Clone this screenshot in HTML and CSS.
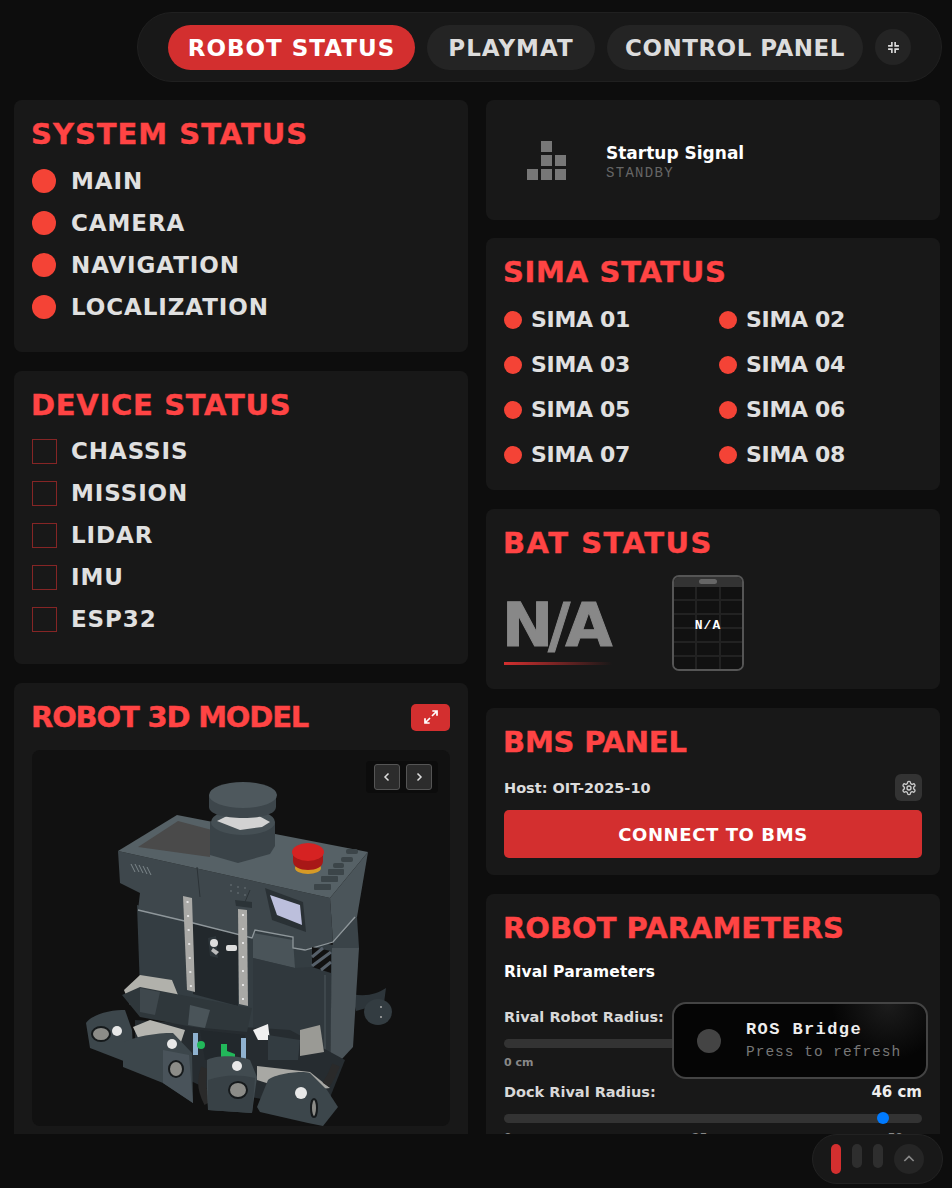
FILE: index.html
```html
<!DOCTYPE html>
<html lang="en">
<head>
    <meta charset="UTF-8">
    <meta name="viewport" content="width=device-width, initial-scale=1.0">
    <title>Robot Status</title>
    <link rel="stylesheet" href="styles.css">
</head>
<body>

<div class="page">
    <header class="topbar">
        <nav class="nav-pill">
            <button class="nav-btn status active">ROBOT STATUS</button>
            <button class="nav-btn playmat">PLAYMAT</button>
            <button class="nav-btn control">CONTROL PANEL</button>
            <button class="nav-round">
                <svg width="13" height="13" viewBox="0 0 24 24" fill="none" stroke="#ddd" stroke-width="3">
                    <path d="M9 2v7H2M15 2v7h7M9 22v-7H2M15 22v-7h7"/>
                </svg>
            </button>
        </nav>
    </header>

    <main class="columns">
        <div class="column">
            <section class="card system-card">
                <h2 class="card-title">SYSTEM STATUS</h2>
                <ul class="status-list">
                    <li><span class="dot"></span>MAIN</li>
                    <li><span class="dot"></span>CAMERA</li>
                    <li><span class="dot"></span>NAVIGATION</li>
                    <li><span class="dot"></span>LOCALIZATION</li>
                </ul>
            </section>

            <section class="card device-card">
                <h2 class="card-title">DEVICE STATUS</h2>
                <ul class="status-list">
                    <li><span class="box"></span>CHASSIS</li>
                    <li><span class="box"></span>MISSION</li>
                    <li><span class="box"></span>LIDAR</li>
                    <li><span class="box"></span>IMU</li>
                    <li><span class="box"></span>ESP32</li>
                </ul>
            </section>

            <section class="card model-card">
                <div class="model-head">
                    <h2 class="card-title">ROBOT 3D MODEL</h2>
                    <button class="expand-btn">
                        <svg width="16" height="16" viewBox="0 0 24 24" fill="none" stroke="#fff" stroke-width="2.6">
                            <path d="M14 3h7v7M21 3l-7.5 7.5M10 21H3v-7M3 21l7.5-7.5"/>
                        </svg>
                    </button>
                </div>
                <div class="viewer">
                    <div class="viewer-arrows">
                        <button class="arrow-btn">
                            <svg width="12" height="12" viewBox="0 0 24 24" fill="none" stroke="#ddd" stroke-width="3"><path d="M15 5l-7 7 7 7"/></svg>
                        </button>
                        <button class="arrow-btn">
                            <svg width="12" height="12" viewBox="0 0 24 24" fill="none" stroke="#ddd" stroke-width="3"><path d="M9 5l7 7-7 7"/></svg>
                        </button>
                    </div>
                    <svg class="robot" viewBox="32 750 418 376" width="418" height="376">
                        <!-- rear wheel -->
                        <path d="M352 994c14 3 25 0 34-6l-2 15-28 8z" fill="#2d353a"/>
                        <ellipse cx="378" cy="1012" rx="14" ry="13" fill="#333c41"/>
                        <circle cx="381" cy="1007" r="1" fill="#aaa"/>
                        <circle cx="381" cy="1017" r="1" fill="#aaa"/>

                        <!-- lower body -->
                        <polygon points="137,905 333,945 330,1072 200,1040 140,990" fill="#343d42"/>
                        <polygon points="333,942 357,917 359,948 332,950" fill="#3a4348"/>
                        <polygon points="332,948 359,948 353,1047 330,1072" fill="#4a5358"/>
                        <polygon points="193,923 238,933 238,1006 193,994" fill="#22282c"/>
                        <polygon points="253,933 293,940 295,968 253,958" fill="#4a5459"/>
                        <polygon points="295,968 312,967 331,973 330,1072 253,1050 253,958" fill="#30383d"/>
                        <path d="M325 975v95" stroke="#3e474c" stroke-width="2" fill="none"/>

                        <!-- upper block -->
                        <polygon points="118,851 330,898 333,942 305,950 293,948 293,937 255,930 252,938 193,923 138,910 140,893 120,883" fill="#3e474c"/>
                        <polygon points="118,851 177,815 368,852 330,898" fill="#566166"/>
                        <polygon points="368,852 357,917 333,942 330,898" fill="#4b555a"/>
                        <polygon points="138,847 178,821 212,830 210,857" fill="#4a4a4a"/>
                        <path d="M138 910l55 13 59 15 3-8 38 7v11l12 2 28-8 22-25" stroke="#8f979b" stroke-width="1.3" fill="none"/>
                        <path d="M197 867l3 30M250 890l-5 12" stroke="#2c3337" fill="none"/>

                        <!-- vents and pins -->
                        <path d="M131 864l4 8M135 864l4 8M139 865l4 8M143 866l4 8M147 867l4 8" stroke="#7c868a" fill="none"/>
                        <path d="M230 885h2M237 887h2M244 888h2M230 891h2M237 893h2M244 895h2" stroke="#6b7478" fill="none"/>

                        <!-- strips -->
                        <polygon points="235,900 252,902 252,908 236,906" fill="#2b3337"/>
                        <polygon points="183,896 192,898 195,992 187,990" fill="#a9a9a6"/>
                        <polygon points="238,909 247,910 248,1006 239,1004" fill="#a9a9a6"/>
                        <path d="M187.500 901l3.500 88M243 914v90" stroke="#e4e4e4" stroke-width="2" stroke-dasharray="2 12" fill="none"/>

                        <!-- parts inside the channel -->
                        <path d="M208 938l8-2 2 22-8-2z" fill="#2d353a"/>
                        <circle cx="214" cy="943" r="4" fill="#ddd"/>
                        <rect x="226" y="945" width="11" height="6" rx="2" fill="#ddd"/>
                        <polygon points="213,948 219,952 216,955 211,951" fill="#bbb"/>

                        <!-- display -->
                        <polygon points="265,888 303,902 306,932 272,920" fill="#2a3135"/>
                        <polygon points="270,895 300,905 302,925 277,915" fill="#bcbfdc"/>

                        <!-- hatch -->
                        <polygon points="312,947 331,951 331,973 312,967" fill="#111"/>
                        <path d="M312 957l11-9M312 966l19-14M321 970l10-8" stroke="#56606a" stroke-width="3" fill="none"/>

                        <!-- top panel buttons -->
                        <g fill="#3c4549">
                            <rect x="346" y="849" width="12" height="5" rx="2"/>
                            <rect x="341" y="857" width="12" height="5" rx="2"/>
                            <rect x="333" y="863" width="11" height="5" rx="2"/>
                            <rect x="328" y="869" width="16" height="6" rx="1"/>
                            <rect x="321" y="876" width="17" height="6" rx="1"/>
                            <rect x="314" y="884" width="17" height="6" rx="1"/>
                        </g>

                        <!-- e-stop -->
                        <ellipse cx="308" cy="868" rx="13" ry="6" fill="#d69a26"/>
                        <path d="M293 853v8c0 6 7 9 15 9s15-3 15-9v-8z" fill="#a81717"/>
                        <ellipse cx="308" cy="852" rx="16" ry="9" fill="#d62222"/>

                        <!-- lidar -->
                        <path d="M210 822v33l28 8 32-9 5-8v-24z" fill="#3a4348"/>
                        <ellipse cx="243" cy="822" rx="32" ry="13" fill="#454f54"/>
                        <path d="M217 821l10-5h32l11 6-8 5-22 3z" fill="#d2d2d2"/>
                        <path d="M209 795v12c0 7 15 11 34 11s33-4 33-11v-12z" fill="#3d464b"/>
                        <ellipse cx="243" cy="795" rx="34" ry="13" fill="#4e585d"/>

                        <!-- base under the bumpers -->
                        <polygon points="135,1020 290,1030 345,1060 325,1110 210,1090 135,1055" fill="#262c30"/>
                        <polygon points="257,1066 310,1072 330,1088 295,1092 257,1080" fill="#a8a8a4"/>

                        <!-- gripper bar -->
                        <polygon points="124,990 140,975 172,980 178,995 130,1005" fill="#b1b1ab"/>
                        <polygon points="122,995 140,987 233,1005 252,1008 247,1032 193,1027 140,1017" fill="#2f373b"/>
                        <polygon points="140,988 160,992 155,1015 140,1012" fill="#3f484d"/>
                        <polygon points="190,1005 210,1010 205,1028 188,1025" fill="#4a5459"/>
                        <polygon points="133,1027 150,1020 185,1030 180,1045 140,1042" fill="#b5b5b0"/>

                        <!-- centre electronics -->
                        <polygon points="200,1030 245,1035 245,1060 205,1060" fill="#22282c"/>
                        <rect x="193" y="1033" width="5" height="22" fill="#8fb2d0"/>
                        <rect x="241" y="1038" width="5" height="22" fill="#8fb2d0"/>
                        <circle cx="201" cy="1045" r="4" fill="#22b85a"/>
                        <path d="M221 1044h6v7l8 3v3h-14z" fill="#22b85a"/>
                        <polygon points="253,1030 268,1024 270,1040 258,1040" fill="#f0f0f0"/>
                        <polygon points="268,1035 300,1040 298,1060 268,1060" fill="#333c41"/>
                        <polygon points="300,1030 320,1025 324,1052 300,1056" fill="#9a9a95"/>

                        <!-- tracks -->
                        <path d="M205 1068c-5 12-3 24 3 35M336 1065c-3 8-6 14-10 20" stroke="#2a2a2a" stroke-width="8" fill="none"/>

                        <!-- bumpers -->
                        <path d="M86 1023c5-8 25-14 39-13l7 20 2 35-44-17z" fill="#3c464b"/>
                        <path d="M123 1043c5-5 35-11 50-10l19 20 1 50-30-20-40-16z" fill="#3c464b"/>
                        <path d="M163 1050l26 5 4 48-30-20z" fill="#49535a"/>
                        <path d="M207 1060c5-4 30-6 43 0l7 17-5 36-44-3-1-20z" fill="#414b50"/>
                        <path d="M208 1080c15-5 30-6 47-2l-3 35-44-3z" fill="#384146"/>
                        <path d="M268 1080c5-5 30-10 42-7l17 17 11 17-15 19-15-3-48-11-3-5z" fill="#3c464b"/>

                        <!-- sensors -->
                        <g fill="#8c8c88" stroke="#161a1c" stroke-width="2">
                            <ellipse cx="101" cy="1034" rx="9" ry="7"/>
                            <ellipse cx="176" cy="1069" rx="7" ry="8"/>
                            <ellipse cx="238" cy="1090" rx="9" ry="8"/>
                            <ellipse cx="314" cy="1108" rx="3" ry="9"/>
                        </g>
                        <g fill="#e8e8e8">
                            <circle cx="117" cy="1031" r="5"/>
                            <circle cx="172" cy="1044" r="5"/>
                            <circle cx="237" cy="1066" r="5"/>
                            <circle cx="301" cy="1093" r="6"/>
                        </g>
                    </svg>
                </div>
            </section>
        </div>

        <div class="column">
            <section class="card signal-card">
                <div class="signal-icon">
                    <span class="cell c2"></span>
                    <span class="cell c2"></span><span class="cell"></span>
                    <span class="cell c1"></span><span class="cell"></span><span class="cell"></span>
                </div>
                <div class="signal-text">
                    <div class="signal-name">Startup Signal</div>
                    <div class="signal-state">STANDBY</div>
                </div>
            </section>

            <section class="card sima-card">
                <h2 class="card-title">SIMA STATUS</h2>
                <ul class="sima-grid">
                    <li><span class="dot small"></span>SIMA 01</li>
                    <li><span class="dot small"></span>SIMA 02</li>
                    <li><span class="dot small"></span>SIMA 03</li>
                    <li><span class="dot small"></span>SIMA 04</li>
                    <li><span class="dot small"></span>SIMA 05</li>
                    <li><span class="dot small"></span>SIMA 06</li>
                    <li><span class="dot small"></span>SIMA 07</li>
                    <li><span class="dot small"></span>SIMA 08</li>
                </ul>
            </section>

            <section class="card bat-card">
                <h2 class="card-title">BAT STATUS</h2>
                <div class="bat-row">
                    <div class="bat-reading">
                        <div class="bat-value">N/A</div>
                        <div class="bat-line"></div>
                    </div>
                    <div class="bat-pack">
                        <div class="bat-cap"><span></span></div>
                        <div class="bat-cells">
                            <i></i><i></i><i></i><i></i><i></i><i></i><i></i><i></i><i></i>
                            <i></i><i></i><i></i><i></i><i></i><i></i><i></i><i></i><i></i>
                        </div>
                        <span class="bat-pack-label">N/A</span>
                    </div>
                </div>
            </section>

            <section class="card bms-card">
                <h2 class="card-title">BMS PANEL</h2>
                <div class="bms-host">
                    <span>Host: OIT-2025-10</span>
                    <button class="gear-btn">
                        <svg width="16" height="16" viewBox="0 0 24 24" fill="none" stroke="#ccc" stroke-width="2">
                            <path d="M12.22 2h-.44a2 2 0 0 0-2 2v.18a2 2 0 0 1-1 1.73l-.43.25a2 2 0 0 1-2 0l-.15-.08a2 2 0 0 0-2.73.73l-.22.38a2 2 0 0 0 .73 2.73l.15.1a2 2 0 0 1 1 1.72v.51a2 2 0 0 1-1 1.74l-.15.09a2 2 0 0 0-.73 2.73l.22.38a2 2 0 0 0 2.73.73l.15-.08a2 2 0 0 1 2 0l.43.25a2 2 0 0 1 1 1.73V20a2 2 0 0 0 2 2h.44a2 2 0 0 0 2-2v-.18a2 2 0 0 1 1-1.73l.43-.25a2 2 0 0 1 2 0l.15.08a2 2 0 0 0 2.73-.73l.22-.39a2 2 0 0 0-.73-2.73l-.15-.08a2 2 0 0 1-1-1.74v-.5a2 2 0 0 1 1-1.74l.15-.09a2 2 0 0 0 .73-2.73l-.22-.38a2 2 0 0 0-2.73-.73l-.15.08a2 2 0 0 1-2 0l-.43-.25a2 2 0 0 1-1-1.73V4a2 2 0 0 0-2-2z"/>
                            <circle cx="12" cy="12" r="3"/>
                        </svg>
                    </button>
                </div>
                <button class="connect-btn">CONNECT TO BMS</button>
            </section>

            <section class="card params-card">
                <h2 class="card-title">ROBOT PARAMETERS</h2>
                <h3 class="params-sub">Rival Parameters</h3>
                <div class="param">
                    <div class="param-head"><span>Rival Robot Radius:</span></div>
                    <div class="track"></div>
                    <div class="param-scale"><span>0 cm</span></div>
                </div>
                <div class="param">
                    <div class="param-head"><span>Dock Rival Radius:</span><span class="param-value">46 cm</span></div>
                    <div class="track"><span class="thumb"></span></div>
                    <div class="param-scale ticks"><span>0</span><span>25</span><span>50</span></div>
                </div>
            </section>
        </div>
    </main>

    <div class="ros-toast">
        <span class="ros-dot"></span>
        <div>
            <div class="ros-name">ROS Bridge</div>
            <div class="ros-hint">Press to refresh</div>
        </div>
    </div>

    <div class="dock">
        <span class="dock-bar on"></span>
        <span class="dock-bar"></span>
        <span class="dock-bar"></span>
        <button class="dock-up">
            <svg width="16" height="16" viewBox="0 0 24 24" fill="none" stroke="#888" stroke-width="2.5"><path d="M5 15l7-7 7 7"/></svg>
        </button>
    </div>
</div>

</body>
</html>
```

FILE: styles.css
```css
* {
    box-sizing: border-box;
}

body {
    margin: 0;
    background-color: #0d0d0d;
    color: #e0e0e0;
    font-family: "DejaVu Sans", sans-serif;
    font-weight: 700;
}

button {
    font-family: inherit;
    font-weight: inherit;
    border: none;
    cursor: pointer;
}

ul {
    list-style: none;
    margin: 0;
    padding: 0;
}

.page {
    position: relative;
    height: 1188px;
    overflow: hidden;
}

/* top nav */
.topbar {
    display: flex;
    justify-content: flex-end;
    padding: 12px 10px 18px 0;
}

.nav-pill {
    display: flex;
    align-items: center;
    gap: 12px;
    height: 70px;
    padding: 0 30px;
    background-color: #181818;
    border: 1px solid #202020;
    border-radius: 35px;
}

.nav-btn {
    height: 45px;
    padding: 2px 0 0;
    border-radius: 23px;
    background-color: #242424;
    color: #dcdcdc;
    font-size: 23px;
    letter-spacing: 1px;
}

.nav-btn.status {
    width: 247px;
}

.nav-btn.playmat {
    width: 168px;
}

.nav-btn.control {
    width: 256px;
    letter-spacing: 0.5px;
}

.nav-btn.active {
    background-color: #d32f2f;
    color: #fff;
}

.nav-round {
    display: flex;
    align-items: center;
    justify-content: center;
    width: 36px;
    height: 36px;
    padding: 0;
    border-radius: 50%;
    background-color: #242424;
}

/* columns */
.columns {
    display: grid;
    grid-template-columns: 454px 454px;
    gap: 18px;
    height: 1034px;
    padding: 0 14px;
    overflow: hidden;
}

.column {
    display: flex;
    flex-direction: column;
    gap: 19px;
}

.card {
    flex: none;
    padding: 18px;
    background-color: #181818;
    border-radius: 8px;
}

.card-title {
    margin: 0 0 0 -1px;
    color: #ff4444;
    font-size: 29px;
    line-height: 32px;
    -webkit-text-stroke: 0.4px #ff4444;
}

.system-card .card-title {
    letter-spacing: 1px;
}

.device-card .card-title {
    letter-spacing: 0.7px;
}

.model-card .card-title {
    letter-spacing: -1.2px;
}

.sima-card .card-title {
    letter-spacing: 0.7px;
}

.bat-card .card-title {
    letter-spacing: 1.5px;
}

.bms-card .card-title {
    letter-spacing: -0.2px;
}

/* status lists */
.system-card {
    height: 252px;
}

.device-card {
    height: 293px;
}

.status-list {
    margin-top: 9px;
}

.system-card .status-list {
    margin-top: 10px;
}

.status-list li {
    display: flex;
    align-items: center;
    gap: 15px;
    height: 42px;
    font-size: 23px;
    letter-spacing: 0.9px;
}

.dot {
    flex: none;
    width: 24px;
    height: 24px;
    border-radius: 50%;
    background-color: #f44336;
}

.dot.small {
    width: 18px;
    height: 18px;
}

.box {
    flex: none;
    width: 25px;
    height: 25px;
    margin-right: -1px;
    border: 1px solid #852525;
}

/* 3d model */
.model-head {
    display: flex;
    align-items: center;
    justify-content: space-between;
    margin-bottom: 17px;
}

.expand-btn {
    display: flex;
    align-items: center;
    justify-content: center;
    width: 39px;
    height: 27px;
    padding: 0;
    background-color: #d32f2f;
    border-radius: 5px;
}

.viewer {
    position: relative;
    height: 376px;
    background-color: #111;
    border-radius: 8px;
}

.robot {
    display: block;
    filter: blur(0.4px);
}

.viewer-arrows {
    position: absolute;
    top: 11px;
    right: 12px;
    display: flex;
    gap: 6px;
    padding: 3px 6px 3px 8px;
    background-color: #0c0c0c;
    border-radius: 4px;
}

.arrow-btn {
    display: flex;
    align-items: center;
    justify-content: center;
    width: 26px;
    height: 26px;
    padding: 0;
    background-color: #2c2c2c;
    border: 1px solid #555;
    border-radius: 3px;
}

/* startup signal */
.signal-card {
    display: flex;
    align-items: center;
    gap: 40px;
    height: 120px;
    margin-bottom: -1px;
    padding: 0 0 0 41px;
}

.signal-icon {
    display: grid;
    grid-template-columns: repeat(3, 11px);
    grid-auto-rows: 11px;
    gap: 3px;
    justify-content: start;
}

.cell {
    background-color: #777;
}

.c1 {
    grid-column: 1;
}

.c2 {
    grid-column: 2;
}

.signal-text {
    padding-top: 2px;
}

.signal-name {
    color: #fff;
    font-size: 17px;
    line-height: 24px;
}

.signal-state {
    margin-top: -1px;
    color: #666;
    font-family: "Liberation Mono", monospace;
    font-size: 14px;
    font-weight: 400;
    letter-spacing: 1.3px;
    line-height: 18px;
}

/* sima */
.sima-card {
    height: 252px;
}

.sima-grid {
    display: grid;
    grid-template-columns: 215px 1fr;
    margin-top: 9px;
}

.sima-grid li {
    display: flex;
    align-items: center;
    gap: 9px;
    height: 45px;
    font-size: 22px;
    letter-spacing: -0.3px;
}

/* battery */
.bat-card {
    height: 180px;
}

.bat-row {
    display: flex;
    align-items: flex-end;
    gap: 60px;
    margin-top: 16px;
}

.bat-reading {
    width: 108px;
    margin-bottom: 6px;
}

.bat-value {
    margin-left: -2px;
    color: #888;
    font-size: 61px;
    line-height: 62px;
    letter-spacing: -5px;
    -webkit-text-stroke: 1px #888;
}

.bat-line {
    height: 3px;
    margin-top: 6px;
    background: linear-gradient(90deg, #d32f2f, transparent);
}

.bat-pack {
    position: relative;
    width: 72px;
    height: 96px;
    overflow: hidden;
    background-color: #111;
    border: 2px solid #555;
    border-radius: 7px;
}

.bat-cap {
    display: flex;
    justify-content: center;
    padding-top: 2px;
    height: 10px;
    background-color: #333;
}

.bat-cap span {
    width: 18px;
    height: 5px;
    border-radius: 3px;
    background-color: #666;
}

.bat-cells {
    display: grid;
    grid-template-columns: repeat(3, 1fr);
    grid-template-rows: repeat(6, 1fr);
    gap: 2px;
    height: 82px;
    background-color: #222;
}

.bat-cells i {
    background-color: #111;
}

.bat-pack-label {
    position: absolute;
    top: 41px;
    left: 0;
    right: 0;
    color: #fff;
    font-family: "Liberation Mono", monospace;
    font-size: 13px;
    letter-spacing: 1px;
    text-align: center;
}

/* bms */
.bms-card {
    height: 167px;
}

.bms-host {
    display: flex;
    align-items: center;
    justify-content: space-between;
    margin-top: 16px;
    font-size: 14.5px;
    color: #dcdcdc;
}

.gear-btn {
    display: flex;
    align-items: center;
    justify-content: center;
    width: 27px;
    height: 27px;
    padding: 0;
    background-color: #333;
    border-radius: 6px;
}

.connect-btn {
    width: 100%;
    height: 48px;
    margin-top: 9px;
    background-color: #d32f2f;
    border-radius: 5px;
    color: #fff;
    font-size: 18px;
    letter-spacing: 0.6px;
}

/* parameters */
.params-card {
    height: 400px;
}

.params-sub {
    margin: 18px 0 24px;
    color: #fff;
    font-size: 15.5px;
    line-height: 20px;
    letter-spacing: 0.1px;
}

.param {
    height: 75px;
}

.param-head {
    display: flex;
    justify-content: space-between;
    height: 22px;
    font-size: 14.5px;
    line-height: 22px;
    color: #d8d8d8;
}

.param-value {
    color: #eee;
    font-size: 15px;
}

.track {
    position: relative;
    height: 9px;
    margin-top: 11px;
    background-color: #333;
    border-radius: 5px;
}

.thumb {
    position: absolute;
    top: -2px;
    left: 373px;
    width: 12px;
    height: 12px;
    border-radius: 50%;
    background-color: #007aff;
}

.param-scale {
    display: flex;
    justify-content: space-between;
    margin-top: 8px;
    color: #888;
    font-size: 11px;
    line-height: 14px;
}

.param-scale.ticks {
    padding-right: 19px;
}

/* floating bits */
.ros-toast {
    position: absolute;
    top: 1002px;
    left: 672px;
    display: flex;
    align-items: center;
    gap: 25px;
    width: 256px;
    height: 77px;
    padding-left: 23px;
    background: radial-gradient(circle at 85% 0%, #1c1c1c, transparent 25%), #050505;
    border: 2px solid #444;
    border-radius: 14px;
}

.ros-dot {
    flex: none;
    width: 24px;
    height: 24px;
    border-radius: 50%;
    background-color: #444;
}

.ros-name {
    color: #eee;
    font-family: "Liberation Mono", monospace;
    font-size: 17px;
    letter-spacing: 1.4px;
    line-height: 22px;
}

.ros-hint {
    color: #777;
    font-family: "Liberation Mono", monospace;
    font-size: 14.5px;
    font-weight: 400;
    letter-spacing: 1px;
    line-height: 22px;
}

.dock {
    position: absolute;
    top: 1134px;
    left: 812px;
    display: flex;
    align-items: flex-start;
    gap: 11px;
    width: 131px;
    height: 50px;
    padding: 9px 0 0 18px;
    background-color: #181818;
    border: 1px solid #222;
    border-radius: 25px;
}

.dock-bar {
    width: 10px;
    height: 24px;
    border-radius: 5px;
    background-color: #2e2e2e;
}

.dock-bar.on {
    height: 30px;
    background-color: #d32f2f;
}

.dock-up {
    display: flex;
    align-items: center;
    justify-content: center;
    width: 30px;
    height: 30px;
    padding: 0;
    border-radius: 50%;
    background-color: #252525;
}
```
